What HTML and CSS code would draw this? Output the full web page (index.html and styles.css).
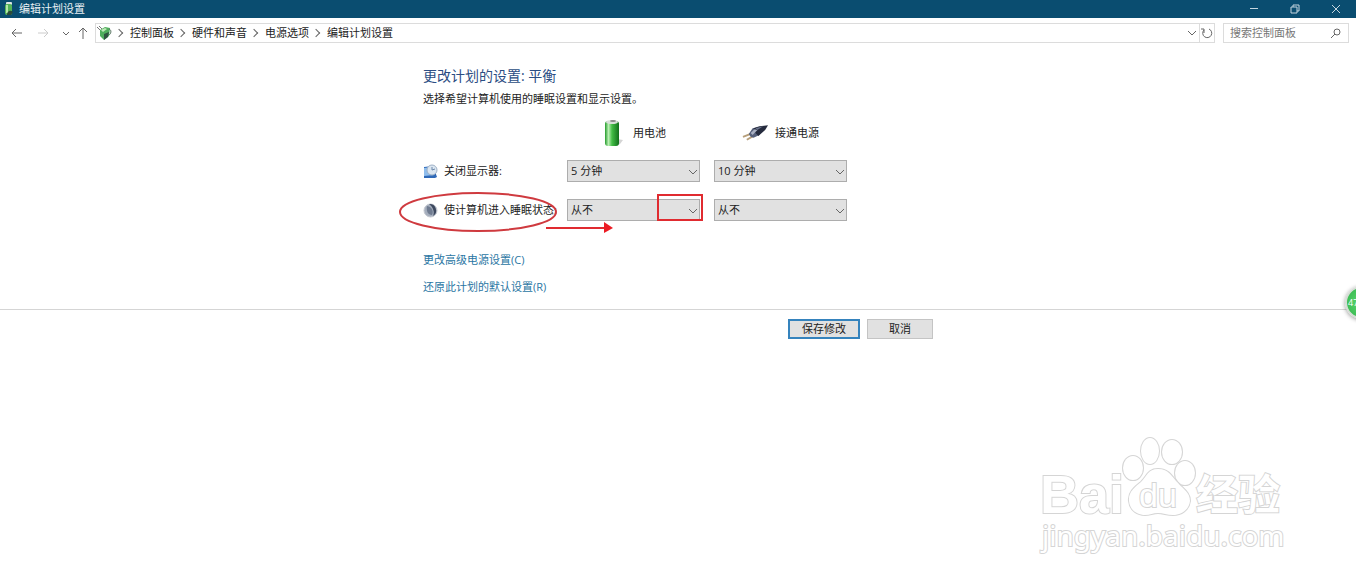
FILE: index.html
```html
<!DOCTYPE html>
<html lang="zh-CN">
<head>
    <meta charset="UTF-8">
    <meta name="viewport" content="width=device-width, initial-scale=1.0">
    <title>编辑计划设置</title>
    <link rel="stylesheet" href="styles.css">
</head>
<body>
    <header class="titlebar">
        <svg class="titlebar-icon" width="14" height="16" viewBox="0 0 14 16">
            <rect x="4" y="1" width="6" height="3" rx="1" fill="#dfe8e4"/>
            <rect x="3" y="3" width="7" height="11" rx="2" fill="#55b558"/>
            <rect x="4" y="4" width="2" height="8" fill="#b4e8a8"/>
            <path d="M5 13c1-4 4-4 6-2l-2 3H5z" fill="#2c4a3b"/>
        </svg>
        <h1 class="titlebar-text">编辑计划设置</h1>
        <div class="window-buttons">
            <button type="button" aria-label="最小化"><svg width="10" height="10" viewBox="0 0 10 10"><path d="M1 4.500h8"/></svg></button>
            <button type="button" aria-label="还原"><svg width="10" height="10" viewBox="0 0 10 10"><path d="M1 3h6v6H1zM3 3V1h6v6H7"/></svg></button>
            <button type="button" aria-label="关闭"><svg width="10" height="10" viewBox="0 0 10 10"><path d="M1 1l8 8M9 1L1 9"/></svg></button>
        </div>
    </header>

    <nav class="navbar">
        <div class="history-buttons">
            <button type="button" aria-label="后退"><svg width="12" height="12" viewBox="0 0 12 12"><path d="M11 6H1M5 2L1 6l4 4"/></svg></button>
            <button type="button" aria-label="前进" disabled><svg width="12" height="12" viewBox="0 0 12 12"><path d="M1 6h10M7 2l4 4-4 4"/></svg></button>
            <button type="button" class="narrow" aria-label="最近的位置"><svg width="8" height="8" viewBox="0 0 8 8"><path d="M1 3l3 3 3-3"/></svg></button>
            <button type="button" class="narrow" aria-label="向上"><svg width="10" height="12" viewBox="0 0 10 12"><path d="M5 12V1M1 5l4-4 4 4"/></svg></button>
        </div>
        <div class="address">
            <svg width="16" height="16" viewBox="0 0 16 16">
                <path d="M1 2l4 4M3 1l3 3" stroke="#777" stroke-width="1"/>
                <path d="M4 5l5-3 5 1-1 8-5 4-4-4z" fill="#4fae5c"/>
                <path d="M5 5l4-2 2 1-4 3z" fill="#bfe9b8"/>
                <path d="M8 9l5-2-1 5-4 3z" fill="#2f5540"/>
                <path d="M13 4c3 1 2 5 0 6" fill="none" stroke="#55745f"/>
            </svg>
            <ol class="breadcrumb">
                <li><a href="#">控制面板</a></li>
                <li><a href="#">硬件和声音</a></li>
                <li><a href="#">电源选项</a></li>
                <li><a href="#">编辑计划设置</a></li>
            </ol>
            <button type="button" class="address-drop" aria-label="以前的位置"><svg width="10" height="10" viewBox="0 0 10 10"><path d="M1 3l4 4 4-4"/></svg></button>
            <button type="button" class="address-refresh" aria-label="刷新"><svg width="12" height="12" viewBox="0 0 12 12"><path d="M8 2a4.500 4.500 0 1 1-5 1M3 6V2H0"/></svg></button>
        </div>
        <div class="search">
            <input type="text" placeholder="搜索控制面板" aria-label="搜索控制面板">
            <svg width="12" height="12" viewBox="0 0 12 12"><circle cx="7" cy="5" r="3"/><path d="M5 7l-4 4"/></svg>
        </div>
    </nav>

    <main>
        <form>
            <section class="plan">
                <h2>更改计划的设置: 平衡</h2>
                <p class="intro">选择希望计算机使用的睡眠设置和显示设置。</p>

                <div class="settings">
                    <span></span>
                    <div class="source">
                        <svg width="26" height="28" viewBox="0 0 26 28">
                            <defs>
                                <linearGradient id="cell">
                                    <stop offset="0" stop-color="#249b2c"/>
                                    <stop offset=".25" stop-color="#b9efb2"/>
                                    <stop offset=".5" stop-color="#42bd45"/>
                                    <stop offset="1" stop-color="#11701b"/>
                                </linearGradient>
                            </defs>
                            <path d="M16 20l6 1-3 4-5 2z" fill="#d4d4d4"/>
                            <rect x="4" y="2" width="14" height="25" rx="3" fill="url(#cell)"/>
                            <ellipse cx="11" cy="3" rx="6" ry="2" fill="#d8ded8"/>
                            <ellipse cx="12" cy="2" rx="3" ry="1" fill="#888"/>
                        </svg>
                        <span>用电池</span>
                    </div>
                    <div class="source">
                        <svg width="27" height="18" viewBox="0 0 28 18">
                            <path d="M9 10l-8 3M12 12l-7 4" stroke="#b79f7a" stroke-width="2"/>
                            <path d="M7 10l4-6 5-1 4 3-2 5-6 3-3-1z" fill="#56607a"/>
                            <path d="M12 4l6-2 9-1-3 5-7 6-3-3z" fill="#252b3d"/>
                            <path d="M9 9l4-4 3 1-5 5z" fill="#a9b0c2"/>
                            <path d="M14 4l8-2-6 4z" fill="#69728b"/>
                        </svg>
                        <span>接通电源</span>
                    </div>

                    <div class="setting-name">
                        <svg width="15" height="15" viewBox="0 0 15 15">
                            <path d="M1 3l9-1 4 11-2 1H1z" fill="#2f69b8"/>
                            <path d="M1 4l7-1 3 8-10 1z" fill="#8fbdec"/>
                            <circle cx="9" cy="6" r="5" fill="#dbe6f1" stroke="#9fb1c6"/>
                            <path d="M9 3v3l3-1" fill="none" stroke="#6c88aa"/>
                        </svg>
                        <span>关闭显示器:</span>
                    </div>
                    <div class="dropdown">
                        <select aria-label="用电池时关闭显示器"><option>5 分钟</option></select>
                        <svg width="8" height="8" viewBox="0 0 8 8"><path d="M0 2l4 4 4-4"/></svg>
                    </div>
                    <div class="dropdown">
                        <select aria-label="接通电源时关闭显示器"><option>10 分钟</option></select>
                        <svg width="8" height="8" viewBox="0 0 8 8"><path d="M0 2l4 4 4-4"/></svg>
                    </div>

                    <div class="setting-name">
                        <svg width="15" height="15" viewBox="0 0 15 15">
                            <circle cx="7.500" cy="7.500" r="6.500" fill="#a5aebd" stroke="#c4c8d0"/>
                            <path d="M6 1a6.500 6.500 0 0 1 4 12C12 9 10 4 6 1z" fill="#3c485e"/>
                            <path d="M4 3c5 1 7 5 5 9-4 0-6-4-5-9z" fill="#6f7b90"/>
                        </svg>
                        <span>使计算机进入睡眠状态:</span>
                    </div>
                    <div class="dropdown">
                        <select aria-label="用电池时使计算机进入睡眠状态"><option>从不</option></select>
                        <svg width="8" height="8" viewBox="0 0 8 8"><path d="M0 2l4 4 4-4"/></svg>
                    </div>
                    <div class="dropdown">
                        <select aria-label="接通电源时使计算机进入睡眠状态"><option>从不</option></select>
                        <svg width="8" height="8" viewBox="0 0 8 8"><path d="M0 2l4 4 4-4"/></svg>
                    </div>

                    <!-- red marks over the sleep row -->
                    <svg class="marks" width="308" height="42" viewBox="0 0 308 42">
                        <ellipse cx="80" cy="21" rx="78" ry="19" fill="none" stroke="#cf3a3f" stroke-width="2"/>
                        <rect x="260" y="4" width="44" height="25" fill="none" stroke="#e02b30" stroke-width="2"/>
                        <path d="M148 37h60" stroke="#e02b30" stroke-width="2"/>
                        <path d="M206 31l9 6-9 5z" fill="#ec1c24"/>
                    </svg>
                </div>

                <ul class="links">
                    <li><a href="#">更改高级电源设置(C)</a></li>
                    <li><a href="#">还原此计划的默认设置(R)</a></li>
                </ul>
            </section>

            <div class="footer">
                <div class="actions">
                    <button type="submit" class="save">保存修改</button>
                    <button type="button" class="cancel">取消</button>
                </div>
            </div>
        </form>
    </main>

    <div class="float-ball">47</div>

    <svg class="watermark" width="250" height="124" viewBox="0 0 250 124">
        <text class="brand" x="2" y="79">Bai</text>
        <ellipse cx="95" cy="34" rx="10" ry="12"/>
        <ellipse cx="112" cy="17" rx="9" ry="13"/>
        <ellipse cx="134" cy="18" rx="10" ry="12"/>
        <ellipse cx="147" cy="39" rx="10" ry="12"/>
        <path d="M120 35c-10 0-11 7-17 13-6 5-13 10-12 19 1 10 9 14 16 14 5 0 8-2 13-2s9 2 15 2c8 0 16-5 17-14 0-9-7-12-12-18-6-6-9-14-20-14z"/>
        <text class="du" x="101" y="73">du</text>
        <text class="product" x="158" y="76">经验</text>
        <text class="site" x="4" y="112">jingyan.baidu.com</text>
    </svg>
</body>
</html>
```
FILE: styles.css
```css
/* Global Styling */
* {
    margin: 0;
    padding: 0;
    box-sizing: border-box;
}

body {
    position: relative;
    min-height: 100vh;
    overflow: hidden;
    background: #fff;
    color: #222;
    font-family: "Open Sans", "Noto Sans CJK SC", sans-serif;
    font-size: 11px;
    line-height: 16px;
}

button,
input,
select {
    font: inherit;
    color: inherit;
}

button {
    border: none;
    background: none;
}

a {
    color: inherit;
    text-decoration: none;
}

ul,
ol {
    list-style: none;
}

svg {
    display: block;
    flex: none;
}

/* Title Bar */
.titlebar {
    display: flex;
    align-items: center;
    height: 18px;
    padding-left: 2px;
    background: #0a4d70;
    color: #e8f0f4;
}

.titlebar-text {
    flex: 1;
    margin-left: 3px;
    font-size: 11px;
    font-weight: normal;
    line-height: 16px;
}

.window-buttons {
    display: flex;
}

.window-buttons button {
    display: flex;
    align-items: center;
    justify-content: center;
    width: 41px;
    height: 16px;
}

.window-buttons path {
    fill: none;
    stroke: #c5d6df;
}

/* Navigation */
.navbar {
    display: flex;
    align-items: center;
    height: 30px;
    padding: 0 7px 0 8px;
}

.history-buttons {
    display: flex;
    width: 87px;
}

.history-buttons button {
    display: flex;
    align-items: center;
    justify-content: center;
    width: 18px;
    height: 18px;
    margin-right: 9px;
}

.history-buttons .narrow {
    width: 12px;
    margin-right: 6px;
}

.history-buttons path,
.address button path,
.search svg {
    fill: none;
    stroke: #666;
}

.history-buttons button:disabled path {
    stroke: #ccc;
}

.address {
    display: flex;
    flex: 1;
    align-items: center;
    height: 20px;
    border: 1px solid #dcdcdc;
}

.breadcrumb {
    display: flex;
    flex: 1;
}

.breadcrumb li {
    display: flex;
    align-items: center;
}

.breadcrumb li::before {
    content: "";
    width: 5px;
    height: 5px;
    margin: 0 8px 0 4px;
    border: solid #666;
    border-width: 1px 1px 0 0;
    transform: rotate(45deg);
}

.address button {
    display: flex;
    align-items: center;
    justify-content: center;
    width: 15px;
    height: 18px;
}

.address .address-refresh {
    border-left: 1px solid #dcdcdc;
}

.search {
    display: flex;
    align-items: center;
    width: 126px;
    height: 20px;
    margin-left: 8px;
    padding: 0 6px;
    border: 1px solid #dcdcdc;
}

.search input {
    flex: 1;
    min-width: 0;
    border: none;
    outline: none;
}

.search input::placeholder {
    color: #777;
}

/* Plan Settings */
.plan,
.actions {
    max-width: 510px;
    margin: 0 auto;
}

.plan {
    padding: 18px 0 14px;
}

.plan h2 {
    color: #2b4d83;
    font-size: 14px;
    font-weight: normal;
    line-height: 20px;
}

.intro {
    margin-top: 5px;
}

.settings {
    position: relative;
    display: grid;
    grid-template-columns: 130px 133px 133px;
    grid-template-rows: 20px 22px 22px;
    gap: 17px 14px;
    align-items: center;
    margin-top: 16px;
}

.source {
    display: flex;
    align-items: center;
    justify-content: center;
    gap: 6px;
    height: 20px;
}

.setting-name {
    display: flex;
    align-items: center;
    gap: 6px;
    white-space: nowrap;
}

.dropdown {
    position: relative;
}

.dropdown select {
    display: block;
    width: 100%;
    height: 22px;
    padding: 0 20px 0 3px;
    appearance: none;
    border: 1px solid #adadad;
    border-radius: 0;
    background: #e1e1e1;
}

.dropdown svg {
    position: absolute;
    top: 8px;
    right: 3px;
    fill: none;
    stroke: #666;
    pointer-events: none;
}

.marks {
    position: absolute;
    bottom: -12px;
    left: -25px;
    pointer-events: none;
}

.links {
    display: grid;
    gap: 11px;
    margin-top: 31px;
    color: #2a76a3;
}

.links a:hover {
    text-decoration: underline;
}

/* Footer Buttons */
.footer {
    padding-top: 9px;
    border-top: 1px solid #d5d5d5;
}

.actions {
    display: flex;
    justify-content: flex-end;
    gap: 7px;
}

.actions button {
    height: 20px;
    border: 1px solid #c4c4c4;
    background: #e1e1e1;
}

.actions .save {
    width: 72px;
    border: 2px solid #3583bd;
}

.actions .cancel {
    width: 66px;
}

/* Floating Ball */
.float-ball {
    position: absolute;
    top: 286px;
    right: -22px;
    width: 33px;
    height: 33px;
    padding-left: 1px;
    border: 2px solid #d5ddd5;
    border-radius: 50%;
    background: radial-gradient(circle, #5fd873, #31b44a);
    box-shadow: 0 1px 4px rgba(0, 0, 0, 0.4);
    color: #fff;
    font-size: 9px;
    line-height: 29px;
}

/* Watermark */
.watermark {
    position: absolute;
    right: 68px;
    bottom: 25px;
    fill: #fff;
    stroke: #d5d5d5;
    stroke-width: 2px;
    paint-order: stroke;
    pointer-events: none;
}

.watermark .brand {
    font: bold 54px "Liberation Sans", sans-serif;
}

.watermark .du {
    font: 34px "Liberation Sans", sans-serif;
}

.watermark .product {
    font: bold 42px "Noto Sans CJK SC", sans-serif;
}

.watermark .site {
    font: 28px "Noto Sans", sans-serif;
}
```
